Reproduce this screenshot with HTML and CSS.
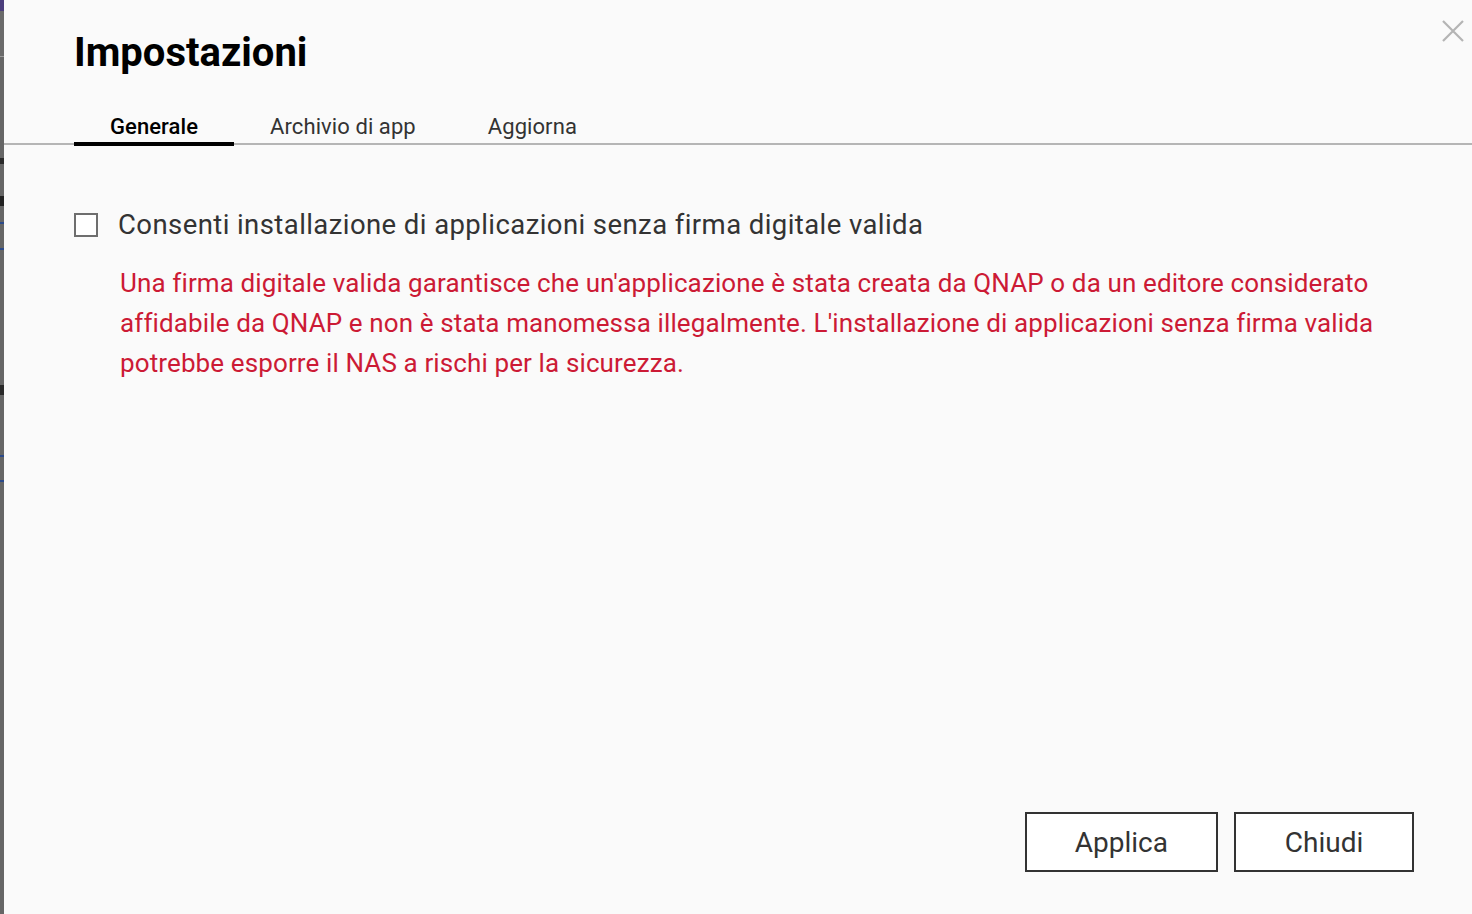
FILE: index.html
```html
<!DOCTYPE html>
<html lang="it">
<head>
<meta charset="utf-8">
<title>Impostazioni</title>
<link rel="stylesheet" href="styles.css">
</head>
<body>
<div class="page">
  <div class="backdrop-edge"></div>
  <div class="dialog">
    <button class="close" aria-label="Chiudi">
      <svg width="24" height="24" viewBox="0 0 24 24"><path d="M2 2 L22 22 M22 2 L2 22" stroke="#b4b4b4" stroke-width="2.2" fill="none"/></svg>
    </button>
    <h1 class="title">Impostazioni</h1>
    <div class="tabs">
      <div class="tab active">Generale</div>
      <div class="tab">Archivio di app</div>
      <div class="tab">Aggiorna</div>
    </div>
    <div class="content">
      <label class="check-row">
        <span class="checkbox"></span>
        <span class="check-label">Consenti installazione di applicazioni senza firma digitale valida</span>
      </label>
      <p class="warning">Una firma digitale valida garantisce che un'applicazione è stata creata da QNAP o da un editore considerato affidabile da QNAP e non è stata manomessa illegalmente. L'installazione di applicazioni senza firma valida potrebbe esporre il NAS a rischi per la sicurezza.</p>
    </div>
    <div class="footer">
      <button class="btn">Applica</button>
      <button class="btn">Chiudi</button>
    </div>
  </div>
</div>
</body>
</html>
```

FILE: styles.css
```css
* { box-sizing: border-box; }
html, body { margin: 0; padding: 0; }
body {
  font-family: Roboto, "Liberation Sans", sans-serif;
  background: #fafafa;
  overflow: hidden;
}
.page {
  display: flex;
  width: 1472px;
  height: 914px;
}
.backdrop-edge {
  width: 4px;
  flex: none;
  background:
    linear-gradient(to bottom,
      #4b3e7c 0, #4b3e7c 11px,
      #6a6a6a 11px, #6a6a6a 56px,
      #9a9a9a 56px, #9a9a9a 57px,
      #666 57px, #666 158px,
      #2a2a2a 158px, #2a2a2a 164px,
      #666 164px, #666 196px,
      #222 196px, #222 206px,
      #666 206px, #666 222px,
      #2c4a8a 222px, #2c4a8a 224px,
      #666 224px, #666 248px,
      #2c4a8a 248px, #2c4a8a 250px,
      #666 250px, #666 385px,
      #2a2a2a 385px, #2a2a2a 395px,
      #666 395px, #666 455px,
      #2c4a8a 455px, #2c4a8a 457px,
      #666 457px, #666 480px,
      #2c4a8a 480px, #2c4a8a 482px,
      #666 482px);
}
.dialog {
  position: relative;
  flex: 1;
  min-width: 0;
  display: flex;
  flex-direction: column;
  background: #fafafa;
}
.close {
  position: absolute;
  top: 19px;
  right: 7px;
  border: 0;
  background: none;
  padding: 0;
  width: 24px;
  height: 24px;
  cursor: pointer;
}
.close svg { display: block; }
.title {
  margin: 33px 0 0 70px;
  font-size: 40px;
  line-height: 40px;
  font-weight: 700;
  color: #000;
}
.tabs {
  display: flex;
  margin-top: 41px;
  padding-left: 70px;
  border-bottom: 2px solid #b5b5b5;
}
.tab {
  font-size: 22px;
  line-height: 26px;
  letter-spacing: 0.08px;
  color: #333;
  padding: 0 36px 3px;
}
.tab.active {
  color: #000;
  font-weight: 500;
  border-bottom: 4px solid #000;
  margin-bottom: -3px;
  padding-bottom: 2px;
}
.content {
  flex: 1;
  padding: 65px 70px 0 70px;
}
.check-row {
  display: flex;
  align-items: center;
  gap: 20px;
}
.checkbox {
  width: 24px;
  height: 24px;
  border: 2px solid #6e6e6e;
  background: #fff;
  flex: none;
}
.check-label {
  font-size: 27.5px;
  line-height: 30px;
  letter-spacing: 0.42px;
  color: #333;
}
.warning {
  margin: 23px 0 0 46px;
  font-size: 26px;
  line-height: 40px;
  letter-spacing: 0.12px;
  color: #cc1a35;
}
.footer {
  display: flex;
  justify-content: flex-end;
  gap: 16px;
  padding: 0 58px 42px 0;
}
.btn {
  height: 60px;
  min-width: 180px;
  padding: 0 48px;
  border: 2px solid #333;
  background: #fff;
  font-family: Roboto, "Liberation Sans", sans-serif;
  font-size: 28px;
  color: #333;
}
```
